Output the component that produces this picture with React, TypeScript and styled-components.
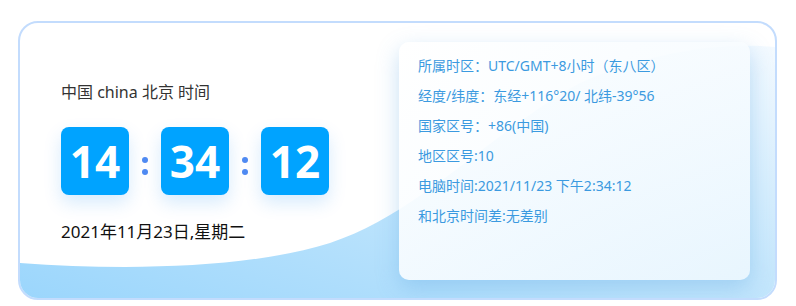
import React from 'react';
import styled, { createGlobalStyle } from 'styled-components';

const GlobalStyle = createGlobalStyle`
  html, body {
    margin: 0;
    padding: 0;
    background: #ffffff;
  }
  body {
    font-family: "Noto Sans", "Noto Sans CJK SC", sans-serif;
  }
`;

const Page = styled.div`
  padding: 21px 19px 6px 18px;
`;

const Card = styled.div`
  position: relative;
  box-sizing: border-box;
  width: 759px;
  height: 279px;
  border: 2px solid #c3dcfd;
  border-radius: 20px;
  overflow: hidden;
  background: #ffffff;
  display: flex;
  justify-content: space-between;
  padding: 19px 25px 18px 41px;
`;

const Wave = styled.svg`
  position: absolute;
  left: 0;
  top: 0;
  width: 100%;
  height: 100%;
  z-index: 0;
`;

const ClockSide = styled.div`
  position: relative;
  z-index: 1;
  display: flex;
  flex-direction: column;
  padding-top: 39px;
`;

const Title = styled.div`
  font-size: 16px;
  line-height: 22px;
  color: #333333;
`;

const Digits = styled.div`
  display: flex;
  align-items: center;
  margin-top: 24px;
`;

const DigitBox = styled.div`
  width: 68px;
  height: 68px;
  border-radius: 8px;
  background: #00a3ff;
  color: #ffffff;
  font-family: "Open Sans", "Noto Sans", sans-serif;
  font-weight: 700;
  font-size: 44px;
  display: flex;
  align-items: center;
  justify-content: center;
  box-shadow: 0 8px 18px rgba(0, 130, 240, 0.16);
`;

const Colon = styled.div`
  width: 32px;
  display: flex;
  flex-direction: column;
  align-items: center;
  gap: 6px;
  padding-top: 10px;
`;

const Dot = styled.span`
  width: 6px;
  height: 6px;
  border-radius: 50%;
  background: #4f8af2;
`;

const DateLine = styled.div`
  margin-top: 26px;
  font-size: 17px;
  line-height: 22px;
  color: #111111;
`;

const InfoPanel = styled.div`
  position: relative;
  z-index: 1;
  width: 351px;
  box-sizing: border-box;
  border-radius: 10px;
  padding: 9px 19px;
  background: linear-gradient(135deg, rgba(255, 255, 255, 0.95), rgba(240, 249, 255, 0.82));
  box-shadow: 0 8px 22px rgba(90, 165, 225, 0.34);
  display: flex;
  flex-direction: column;
`;

const InfoRow = styled.div`
  font-size: 14px;
  line-height: 30px;
  color: #3b9ae0;
  white-space: nowrap;
`;

const rows = [
  '所属时区：UTC/GMT+8小时（东八区）',
  '经度/纬度：东经+116°20/ 北纬-39°56',
  '国家区号：+86(中国)',
  '地区区号:10',
  '电脑时间:2021/11/23 下午2:34:12',
  '和北京时间差:无差别',
];

export default function App() {
  const parts = ['14', '34', '12'];
  return (
    <Page>
      <GlobalStyle />
      <Card>
        <Wave viewBox="0 0 755 275" preserveAspectRatio="none">
          <defs>
            <linearGradient id="waveFill" x1="0" y1="1" x2="1" y2="0">
              <stop offset="0" stopColor="#9bd6fc" />
              <stop offset="0.55" stopColor="#c6e7fc" />
              <stop offset="1" stopColor="#f4faff" />
            </linearGradient>
          </defs>
          <path
            d="M0,240 C110,248 230,245 310,220 C400,190 470,110 560,60 C640,25 710,20 755,24 L755,275 L0,275 Z"
            fill="url(#waveFill)"
          />
        </Wave>
        <ClockSide>
          <Title>中国 china 北京 时间</Title>
          <Digits>
            {parts.map((p, i) => (
              <React.Fragment key={i}>
                {i > 0 && (
                  <Colon>
                    <Dot />
                    <Dot />
                  </Colon>
                )}
                <DigitBox>{p}</DigitBox>
              </React.Fragment>
            ))}
          </Digits>
          <DateLine>2021年11月23日,星期二</DateLine>
        </ClockSide>
        <InfoPanel>
          {rows.map((r) => (
            <InfoRow key={r}>{r}</InfoRow>
          ))}
        </InfoPanel>
      </Card>
    </Page>
  );
}
